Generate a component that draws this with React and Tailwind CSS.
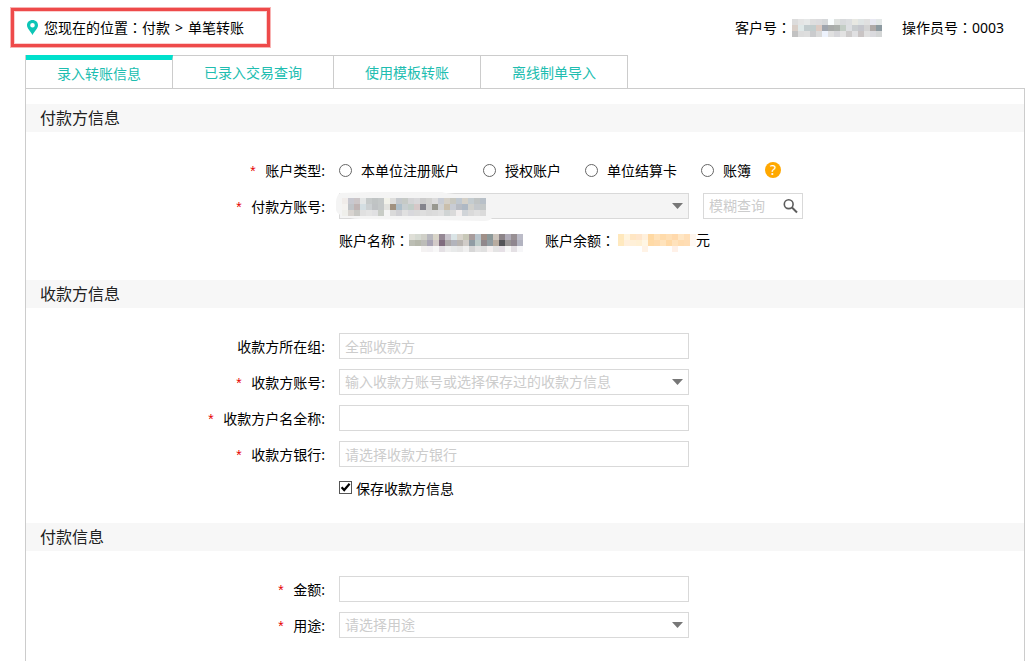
import React from "react";

const CUSTOMER_ID = [
  "dcdcdc e4e4e4 e6e8e8 dedede dcdcde d6d8da fafeff dfe2e0 d8dadc dcdee0 e8e8e2 dfe4e4 e0e0e0 e8e8f2 e4e8e8",
  "d9cfc8 dfe8e8 c3ccce c2cdcd dccbc3 9fa5ae a8abaa abb0ac c3cdc5 dddfe2 c9cdcf c5c6cc d3d3d3 b0aaa9 8d9aa1",
  "c2c2c2 dcdcdc dedede cacbcd dadada edf2fc e0e0e0 d6d6da e2e2e2 cdcbcb e0e0e2 c9c4c4 e0e0e0 dadade d4d6d6",
];

const PAYER_ACCOUNT = [
  "f0ecea c8c8d0 ccc6c8 e4e6e6 c6caca c0c4c4 c4c8c8 f2f2ea dededc c4c8cc c6cac6 d4d4d6 d8d8da cccccc d2d2d0 dcdcdc c8ccd4 d4d0c8 c8c8c0 c0c8d0 d4d0c8 c4ccd0 c0c4c4 b8c0c8",
  "f4f2f0 c0c4c8 c0b4b4 d4dee2 ccd0d2 bfc2c4 c4c8c8 e2e2de a0917f aebfca c8ced0 c2cdc8 d6c8c8 84848c d0d0d0 98988f d0d2d4 cabfac c8ccd4 b8bcc4 aeb8c4 d0d0cc c4c8cc c4c8c8",
  "efefeb d8d4d0 c8c8c4 e0e0e0 e4e4e4 e0e0e2 c8ccc6 f4f4f4 dadada d0d0d4 e0e0e0 d8d8dc dadada dedede dadada dcdcdc e0e0e0 d0d4d4 dadada f2eeee d0d4d8 dadada e0e0e0 dadada",
];

const ACCOUNT_NAME = [
  "dfdfd7 d6dad2 d0d0c8 b8b8be d8d4c8 958894 c8c4cc dae4e6 d8d4cc c8c8b8 a89c9c b8c4cc a09088 8c9898 ccc4bc 8c8488 b0acb8 989094 bcbcc8",
  "bcbeb4 b6b8ac bcbcb8 a8a4b4 d2cac8 806c7e aca8a8 b2b4bc b8b4b0 d0ccc8 909ca4 bccac8 90888c 929da2 b8aca0 545458 989494 8f868f b2b3c0",
  "ffffff ffffff f4f2f2 f2f0f2 f8f8f8 e4e0e4 eeeeee e8eaea e6e6e6 f0f0f0 d6d6d6 e4e4e4 e0e0e0 f4f0f0 e4e4e4 e6e0e6 f8f8f8 e4e0e4 f6f6f8",
];

const BALANCE = [
  "ffe8bc fff4de ffe6c4 ffe6cc fff0dc ffd9a3 ffe2ba ffdbab ffdfb5 ffd9ac ffe6c4 ffdfb8 fff6ee",
  "ffe9bf ffefdc fff0d8 fff0d4 fff6e4 ffdaa6 ffdbad ffe3bc ffd9a6 ffe2bc ffdcb0 ffddb4 fff9f4",
  "ffffff ffffff ffffff ffffff fff3e6 ffffff ffffff ffffff ffffff fff1e8 ffffff ffffff ffffff",
];

function Mosaic({ rows, className = "" }) {
  const cells = rows.map((row) => row.split(" "));
  const width = cells[0].length * 6;
  return (
    <svg
      width={width}
      height="18"
      viewBox={`0 0 ${width} 18`}
      shapeRendering="crispEdges"
      className={`shrink-0 ${className}`}
      aria-hidden="true"
    >
      {cells.map((row, y) =>
        row.map((color, x) => (
          <rect key={`${x}-${y}`} x={x * 6} y={y * 6} width="6" height="6" fill={`#${color}`} />
        ))
      )}
    </svg>
  );
}

function Colon() {
  return <span className="font-['Noto_Sans_CJK_TC',sans-serif]">：</span>;
}

function Pin() {
  return (
    <svg width="11" height="15" viewBox="0 0 11 15" className="shrink-0" aria-hidden="true">
      <path
        fill="#0cc5b6"
        fillRule="evenodd"
        d="M5.5 0C2.2 0 0 2.3 0 5.2C0 8.4 3.4 11 5.5 15C7.6 11 11 8.4 11 5.2C11 2.3 8.8 0 5.5 0ZM5.5 2.9A2.3 2.3 0 1 1 5.5 7.5A2.3 2.3 0 1 1 5.5 2.9Z"
      />
    </svg>
  );
}

const tabs = ["录入转账信息", "已录入交易查询", "使用模板转账", "离线制单导入"];
const accountTypes = ["本单位注册账户", "授权账户", "单位结算卡", "账簿"];

function Section({ title, children }) {
  return (
    <section>
      <h2 className="flex h-7 items-center bg-[#f7f7f7] pl-[14px] text-base leading-7 text-[#222]">{title}</h2>
      <div className="flex flex-col gap-[10px] py-[25px]">{children}</div>
    </section>
  );
}

function Row({ id, label, required, children }) {
  const Tag = id ? "label" : "span";
  return (
    <div className="flex h-[26px] items-center gap-[14px]">
      <Tag htmlFor={id} className="flex w-[299px] shrink-0 items-center justify-end gap-2 pt-[2px]">
        {required && (
          <span className="pt-1 font-['Liberation_Mono',monospace] text-sm leading-4 text-[#e60000]">*</span>
        )}
        {label}:
      </Tag>
      {children}
    </div>
  );
}

const box = "h-[26px] w-[350px] border border-[#d9d9d9] px-[5px] text-sm leading-6 outline-none placeholder:text-[#ccc]";

function Select({ id, text = "", filled, children }) {
  return (
    <div className="relative h-[26px]">
      <select id={id} className={`${box} appearance-none text-[#ccc] ${filled ? "bg-[#f4f4f4]" : "bg-white"}`}>
        <option>{text}</option>
      </select>
      {children}
      <svg
        width="11"
        height="6"
        viewBox="0 0 11 6"
        className="pointer-events-none absolute top-[10px] right-[6px]"
        aria-hidden="true"
      >
        <path d="M0 0H11L5.5 6Z" fill="#777" />
      </svg>
    </div>
  );
}

function TextField({ id, placeholder }) {
  return <input id={id} type="text" placeholder={placeholder} className={`${box} bg-white`} />;
}

export default function App() {
  return (
    <div className="h-screen overflow-hidden bg-white font-['Noto_Sans','Noto_Sans_CJK_SC',sans-serif] text-sm leading-5 text-black">
      <header className="flex h-[55px] items-center justify-between pr-[30px] pl-[11px]">
        <nav className="flex h-[39px] w-[259px] items-center gap-[6px] border-[3px] border-[#ee4a4a] pl-[13px] whitespace-nowrap shadow-[0_0_0_1px_#f8b4b4,inset_0_0_0_1px_#fbd0d0]">
          <Pin />
          <span>
            您现在的位置
            <Colon />
            <a href="#pay">付款</a>
            <span className="px-[5px]">&gt;</span>
            <a href="#single">单笔转账</a>
          </span>
        </nav>
        <div className="flex items-center gap-5">
          <span className="flex items-center gap-px">
            <span>
              客户号
              <Colon />
            </span>
            <Mosaic rows={CUSTOMER_ID} />
          </span>
          <span>
            操作员号
            <Colon />
            0003
          </span>
        </div>
      </header>

      <main className="mr-[9px] ml-[25px]">
        <div className="flex h-[33px] border-l border-[#ccc]">
          {tabs.map((tab, i) => (
            <button
              key={tab}
              type="button"
              className={`border-r border-r-[#ccc] px-[31px] text-[#20bdb0] ${
                i === 0 ? "border-t-[5px] border-t-[#00e0cc]" : "border-t border-t-[#ccc] pt-[2px]"
              }`}
            >
              {tab}
            </button>
          ))}
        </div>

        <form className="border border-[#ccc] pt-[15px]">
          <Section title="付款方信息">
            <Row label="账户类型" required>
              <div className="flex items-center gap-[14px]">
                <div className="flex items-center gap-6">
                  {accountTypes.map((type) => (
                    <label key={type} className="flex items-center gap-[9px]">
                      <input
                        type="radio"
                        name="accountType"
                        className="size-[13px] appearance-none rounded-full border border-[#666] bg-white checked:border-4"
                      />
                      <span className="pt-[2px]">{type}</span>
                    </label>
                  ))}
                </div>
                <button
                  type="button"
                  aria-label="帮助"
                  className="flex size-4 items-center justify-center rounded-full bg-[#ffa800] text-sm leading-4 text-white"
                >
                  ?
                </button>
              </div>
            </Row>
            <Row id="payer" label="付款方账号" required>
              <Select id="payer" filled>
                <svg
                  width="160"
                  height="30"
                  viewBox="0 0 160 30"
                  className="pointer-events-none absolute -top-px -left-[3px]"
                  aria-hidden="true"
                >
                  <path d="M4 1Q50 -1 106 0Q115 3 150 3Q157 8 156 26Q154 29 148 29L96 28L24 27Q2 26 0 18Q-1 4 4 1Z" fill="#f4f4f4" />
                </svg>
                <Mosaic rows={PAYER_ACCOUNT} className="pointer-events-none absolute top-[5px] left-[3px]" />
              </Select>
              <div className="flex h-[26px] w-[100px] items-center border border-[#d9d9d9] bg-white pr-1 pl-[5px]">
                <input
                  type="text"
                  aria-label="模糊查询"
                  placeholder="模糊查询"
                  className="h-6 w-0 flex-1 text-sm leading-6 outline-none placeholder:text-[#ccc]"
                />
                <button type="button" aria-label="查询">
                  <svg width="15" height="15" viewBox="0 0 15 15" fill="none" stroke="#5c5c5c" aria-hidden="true">
                    <circle cx="5.7" cy="5.2" r="4.4" strokeWidth="1.6" />
                    <path d="M9 8.5L14 13.5" strokeWidth="2" />
                  </svg>
                </button>
              </div>
            </Row>
            <div className="flex h-[26px] items-start gap-[22px] pt-px pl-[313px]">
              <span className="flex">
                <span>
                  账户名称
                  <Colon />
                </span>
                <Mosaic rows={ACCOUNT_NAME} className="mt-1" />
              </span>
              <span className="flex">
                <span className="pr-[3px]">
                  账户余额
                  <Colon />
                </span>
                <Mosaic rows={BALANCE} className="mt-1" />
                元
              </span>
            </div>
          </Section>

          <Section title="收款方信息">
            <Row id="group" label="收款方所在组">
              <TextField id="group" placeholder="全部收款方" />
            </Row>
            <Row id="payee" label="收款方账号" required>
              <Select id="payee" text="输入收款方账号或选择保存过的收款方信息" />
            </Row>
            <Row id="payeeName" label="收款方户名全称" required>
              <TextField id="payeeName" />
            </Row>
            <Row id="bank" label="收款方银行" required>
              <TextField id="bank" placeholder="请选择收款方银行" />
            </Row>
            <div className="flex h-[21px] items-center pl-[313px]">
              <label className="flex items-center gap-1">
                <span className="grid size-[13px]">
                  <input
                    type="checkbox"
                    defaultChecked
                    className="peer col-start-1 row-start-1 size-[13px] appearance-none border border-[#555] bg-white"
                  />
                  <svg
                    width="13"
                    height="13"
                    viewBox="0 0 13 13"
                    className="pointer-events-none invisible col-start-1 row-start-1 peer-checked:visible"
                    aria-hidden="true"
                  >
                    <path d="M2.6 6.2L5.2 9L10.6 2.8" fill="none" stroke="#000" strokeWidth="2.2" />
                  </svg>
                </span>
                <span className="pt-[2px]">保存收款方信息</span>
              </label>
            </div>
          </Section>

          <Section title="付款信息">
            <Row id="amount" label="金额" required>
              <TextField id="amount" />
            </Row>
            <Row id="purpose" label="用途" required>
              <Select id="purpose" text="请选择用途" />
            </Row>
          </Section>
        </form>
      </main>
    </div>
  );
}
